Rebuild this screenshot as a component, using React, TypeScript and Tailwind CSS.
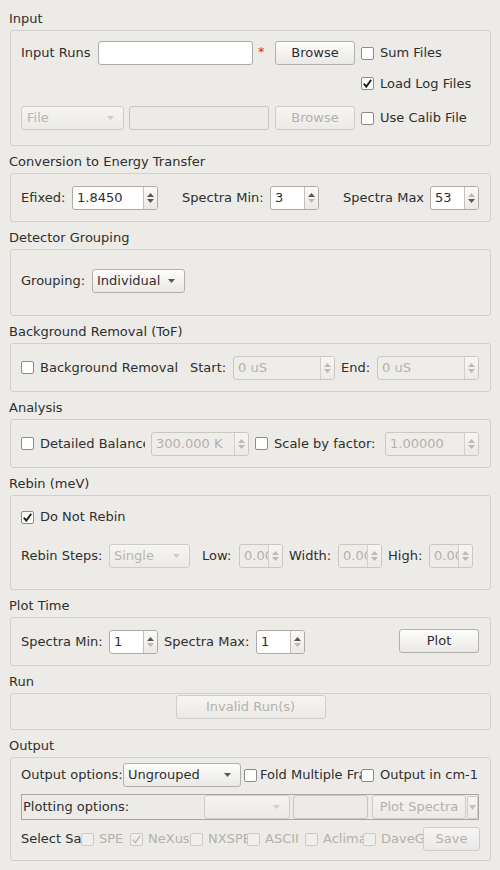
import React from 'react';

const cx = (...c: (string | false | undefined)[]) => c.filter(Boolean).join(' ');

function Check({ checked, disabled, className }: { checked?: boolean; disabled?: boolean; className?: string }) {
  return (
    <div
      className={cx(
        'w-[13px] h-[13px] shrink-0 rounded-[2px] border flex items-center justify-center',
        disabled ? 'border-[#cdc9c4] bg-[#f1efec]' : 'border-[#8e8b87] bg-white',
        className
      )}
    >
      {checked && (
        <svg width="11" height="11" viewBox="0 0 11 11">
          <path
            d="M1.8 5.6 L4.3 8.6 L9.2 1.8"
            fill="none"
            stroke={disabled ? '#b9b5b0' : '#1f1f1f'}
            strokeWidth={disabled ? 1.3 : 1.9}
          />
        </svg>
      )}
    </div>
  );
}

function Btn({ children, disabled, className }: { children: React.ReactNode; disabled?: boolean; className?: string }) {
  return (
    <div
      className={cx(
        'h-[24px] shrink-0 rounded-[3px] border flex items-center justify-center bg-gradient-to-b whitespace-nowrap overflow-hidden',
        disabled
          ? 'border-[#d0ccc7] from-[#f6f5f3] to-[#eceae7] text-[#b4b0ab]'
          : 'border-[#b3afaa] from-[#fdfdfc] to-[#ebe9e6] text-[#2e2e2e]',
        className
      )}
    >
      {children}
    </div>
  );
}

function Field({ disabled, className }: { disabled?: boolean; className?: string }) {
  return (
    <div
      className={cx(
        'h-[24px] shrink-0 rounded-[3px] border',
        disabled ? 'border-[#c9c5c0] bg-[#edebe7]' : 'border-[#aeaaa5] bg-white',
        className
      )}
    />
  );
}

function Arrow({ dir, off }: { dir: 'up' | 'down'; off?: boolean }) {
  return (
    <svg width="7" height="4" viewBox="0 0 7 4">
      <polygon points={dir === 'up' ? '0,4 3.5,0 7,4' : '0,0 7,0 3.5,4'} fill={off ? '#bdb9b4' : '#585755'} />
    </svg>
  );
}

// spin box: text + narrow up/down column
function Spin({
  value,
  disabled,
  upOff,
  downOff,
  className,
}: {
  value: string;
  disabled?: boolean;
  upOff?: boolean;
  downOff?: boolean;
  className?: string;
}) {
  return (
    <div
      className={cx(
        'h-[24px] shrink-0 flex rounded-[3px] border overflow-hidden',
        disabled ? 'border-[#cbc7c2] bg-[#efedea] text-[#b4b0ab]' : 'border-[#aeaaa5] bg-white text-[#2e2e2e]',
        className
      )}
    >
      <div className="flex-1 min-w-0 overflow-hidden whitespace-nowrap pl-[4px] flex items-center">{value}</div>
      <div
        className={cx(
          'w-[14px] shrink-0 flex flex-col border-l bg-gradient-to-b',
          disabled ? 'border-[#d3cfca] from-[#f6f5f3] to-[#eceae7]' : 'border-[#c4c0bb] from-[#fafaf9] to-[#ebe9e6]'
        )}
      >
        <div className="flex-1 flex items-end justify-center pb-[1px]">
          <Arrow dir="up" off={disabled || upOff} />
        </div>
        <div className="flex-1 flex items-start justify-center pt-[1px]">
          <Arrow dir="down" off={disabled || downOff} />
        </div>
      </div>
    </div>
  );
}

function Combo({ value, disabled, className }: { value: string; disabled?: boolean; className?: string }) {
  return (
    <div
      className={cx(
        'h-[24px] shrink-0 flex items-center rounded-[3px] border bg-gradient-to-b pl-[4px] pr-[9px]',
        disabled
          ? 'border-[#d0ccc7] from-[#f6f5f3] to-[#eceae7] text-[#b8b4af]'
          : 'border-[#b3afaa] from-[#fdfdfc] to-[#ebe9e6] text-[#2e2e2e]',
        className
      )}
    >
      <span className="flex-1 whitespace-nowrap overflow-hidden">{value}</span>
      <svg width="7" height="4" viewBox="0 0 7 4">
        <polygon points="0,0 7,0 3.5,4" fill={disabled ? '#cfcbc6' : '#5a5957'} />
      </svg>
    </div>
  );
}

function Label({ children, className, muted }: { children: React.ReactNode; className?: string; muted?: boolean }) {
  return (
    <div className={cx('shrink-0 whitespace-nowrap overflow-hidden', muted && 'text-[#b4b0ab]', className)}>
      {children}
    </div>
  );
}

function Section({ title, className, children }: { title: string; className?: string; children: React.ReactNode }) {
  return (
    <>
      <div className="mt-[3px] h-[24px] leading-[25px] pl-[9px]">{title}</div>
      <div className={cx('ml-[10px] w-[481px] shrink-0 rounded-[3px] border border-[#d3cfca]', className)}>
        {children}
      </div>
    </>
  );
}

export default function App() {
  return (
    <div className="w-[500px] h-[870px] overflow-hidden bg-[#edebe7] text-[#2e2e2e] text-[13px] leading-[16px] font-['DejaVu_Sans',sans-serif] pt-[3px] flex flex-col">
      <Section title="Input" className="h-[116px] pl-[10px] pt-[10px] flex flex-col">
        <div className="flex items-center h-[24px]">
          <Label className="w-[77px]">Input Runs</Label>
          <Field className="w-[155px]" />
          <div className="w-[22px] shrink-0 pl-[5px] text-[#d42a2a] self-start pt-[3px]">*</div>
          <Btn className="w-[80px]">Browse</Btn>
          <Check className="ml-[6px]" />
          <Label className="ml-[6px]">Sum Files</Label>
        </div>
        <div className="flex items-center h-[25px] mt-[6px] pl-[340px]">
          <Check checked />
          <Label className="ml-[6px]">Load Log Files</Label>
        </div>
        <div className="flex items-center h-[24px] mt-[10px]">
          <Combo value="File" disabled className="w-[103px] pl-[5px]" />
          <Field disabled className="w-[140px] ml-[5px]" />
          <Btn disabled className="w-[80px] ml-[6px]">
            Browse
          </Btn>
          <Check className="ml-[6px]" />
          <Label className="ml-[6px]">Use Calib File</Label>
        </div>
      </Section>

      <Section title="Conversion to Energy Transfer" className="h-[49px] pl-[10px] flex items-center">
        <Label className="w-[51px]">Efixed:</Label>
        <Spin value="1.8450" className="w-[86px]" />
        <Label className="w-[88px] ml-[24px]">Spectra Min:</Label>
        <Spin value="3" downOff className="w-[49px]" />
        <Label className="w-[87px] ml-[24px]">Spectra Max</Label>
        <Spin value="53" upOff className="w-[49px]" />
      </Section>

      <Section title="Detector Grouping" className="h-[67px] pl-[10px] pt-[19px] flex items-start">
        <div className="flex items-center h-[24px]">
          <Label className="w-[71px]">Grouping:</Label>
          <Combo value="Individual" className="w-[93px]" />
        </div>
      </Section>

      <Section title="Background Removal (ToF)" className="h-[49px] pl-[10px] flex items-center">
        <Check />
        <Label className="w-[150px] ml-[6px]">Background Removal</Label>
        <Label className="w-[43px]">Start:</Label>
        <Spin value="0 uS" disabled className="w-[102px]" />
        <Label className="w-[36px] ml-[6px]">End:</Label>
        <Spin value="0 uS" disabled className="w-[102px]" />
      </Section>

      <Section title="Analysis" className="h-[49px] pl-[10px] flex items-center">
        <Check />
        <Label className="w-[105px] ml-[6px]">Detailed Balance</Label>
        <Spin value="300.000 K" disabled className="w-[98px] ml-[6px]" />
        <Check className="ml-[6px]" />
        <Label className="w-[111px] ml-[6px]">Scale by factor:</Label>
        <Spin value="1.00000" disabled className="w-[94px]" />
      </Section>

      <Section title="Rebin (meV)" className="h-[95px] pl-[10px] pt-[9px] flex flex-col">
        <div className="flex items-center h-[24px]">
          <Check checked />
          <Label className="ml-[6px]">Do Not Rebin</Label>
        </div>
        <div className="flex items-center h-[24px] mt-[15px]">
          <Label className="w-[88px]">Rebin Steps:</Label>
          <Combo value="Single" disabled className="w-[81px]" />
          <Label className="w-[37px] ml-[12px]">Low:</Label>
          <Spin value="0.00" disabled className="w-[44px]" />
          <Label className="w-[49px] ml-[6px]">Width:</Label>
          <Spin value="0.00" disabled className="w-[44px]" />
          <Label className="w-[41px] ml-[6px]">High:</Label>
          <Spin value="0.00" disabled className="w-[44px]" />
        </div>
      </Section>

      <Section title="Plot Time" className="h-[49px] pl-[10px] pr-[11px] flex items-center">
        <Label className="w-[88px]">Spectra Min:</Label>
        <Spin value="1" downOff className="w-[49px]" />
        <Label className="w-[92px] ml-[6px]">Spectra Max:</Label>
        <Spin value="1" downOff className="w-[49px]" />
        <Btn className="w-[80px] ml-auto -mt-[1px]">Plot</Btn>
      </Section>

      <Section title="Run" className="h-[37px] pt-[1px] flex justify-center items-start">
        <Btn disabled className="w-[150px]">
          Invalid Run(s)
        </Btn>
      </Section>

      <Section title="Output" className="h-[104px] pl-[10px] pt-[5px] flex flex-col">
        <div className="flex items-center h-[24px]">
          <Label className="w-[102px]">Output options:</Label>
          <Combo value="Ungrouped" className="w-[118px]" />
          <Check className="ml-[3px]" />
          <Label className="w-[101px] ml-[3px]">Fold Multiple Frames</Label>
          <Check />
          <Label className="ml-[6px]">Output in cm-1</Label>
        </div>
        <div className="mt-[7px] w-[458px] h-[26px] border border-[#a9a6a2] flex items-center pl-[1px]">
          <Label className="w-[181px]">Plotting options:</Label>
          <Combo value="" disabled className="w-[86px] h-[22px]" />
          <Field disabled className="w-[75px] h-[22px] ml-[3px]" />
          <Btn disabled className="w-[94px] h-[23px] ml-[4px]">
            Plot Spectra
          </Btn>
          <div className="w-[11px] h-[23px] ml-[1px] shrink-0 rounded-[2px] border border-[#d0ccc7] bg-gradient-to-b from-[#f6f5f3] to-[#eceae7] flex items-center justify-center">
            <svg width="7" height="5" viewBox="0 0 7 5">
              <polygon points="0,0 7,0 3.5,5" fill="#c4c0bb" />
            </svg>
          </div>
        </div>
        <div className="flex items-center h-[24px] mt-[7px]">
          <Label className="w-[60px]">Select Save Formats:</Label>
          {[
            { t: 'SPE', w: 'w-[49px]', c: false },
            { t: 'NeXus', w: 'w-[60px]', c: true },
            { t: 'NXSPE', w: 'w-[57px]', c: false },
            { t: 'ASCII', w: 'w-[58px]', c: false },
            { t: 'Aclimax', w: 'w-[58px]', c: false },
            { t: 'DaveGrp', w: 'w-[60px]', c: false },
          ].map((f) => (
            <div key={f.t} className={cx('flex items-center shrink-0 overflow-hidden', f.w)}>
              <Check disabled checked={f.c} />
              <Label muted className="ml-[5px] flex-1 min-w-0">
                {f.t}
              </Label>
            </div>
          ))}
          <Btn disabled className="w-[57px]">
            Save
          </Btn>
        </div>
      </Section>
    </div>
  );
}
